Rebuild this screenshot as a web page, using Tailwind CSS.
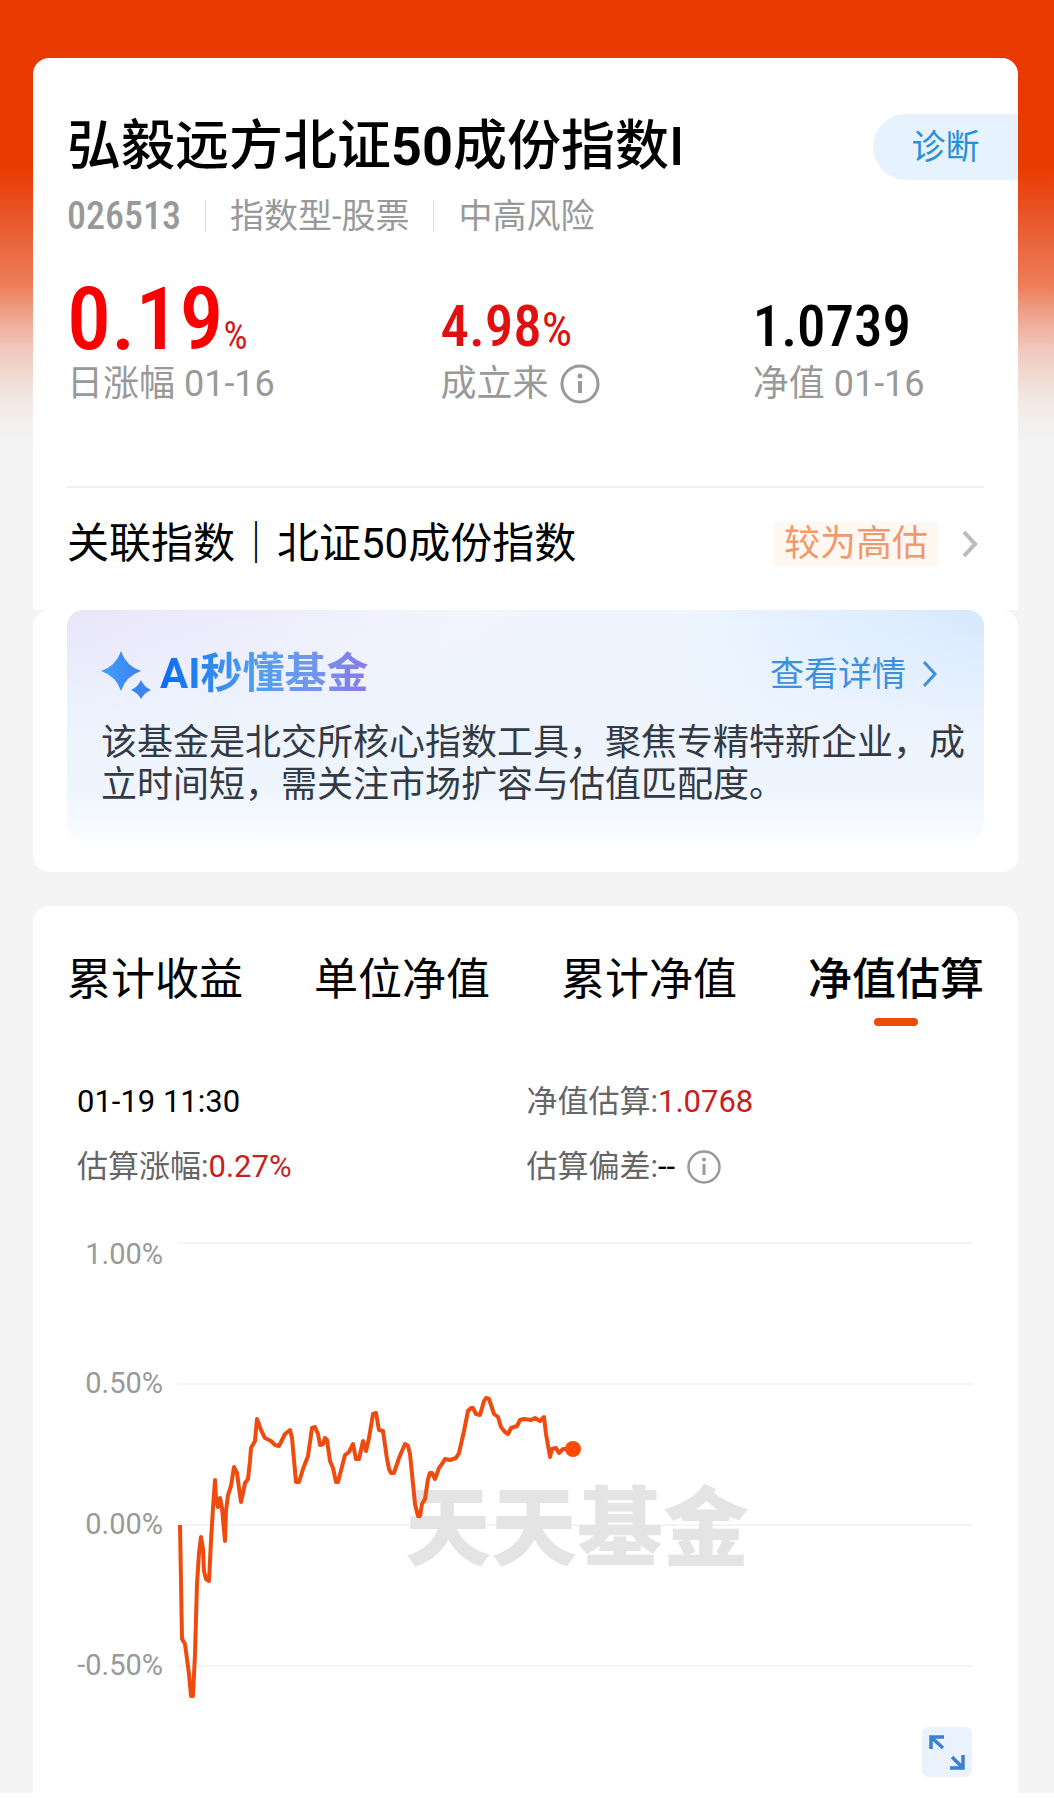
<!DOCTYPE html>
<html lang="zh-CN">
<head>
<meta charset="UTF-8">
<meta name="viewport" content="width=device-width, initial-scale=1.0">
<title>弘毅远方北证50成份指数I</title>
<script src="https://cdn.jsdelivr.net/npm/@tailwindcss/browser@4"></script>
</head>
<body class="bg-white font-['Roboto','Noto_Sans_CJK_SC',sans-serif] text-black">
<div class="bg-[#f4f4f4] bg-[linear-gradient(180deg,#e83900_165px,#e95e33_230px,#ee7d58_285px,#f0a38c_315px,#f1c9be_350px,#f1e0da_385px,#f3f0ee_420px,#f4f4f4_450px)] pl-[33px] pr-9 pt-[58px]">

<!-- fund summary -->
<section class="bg-white rounded-t-2xl pt-14 pb-6">
<div class="flex items-center justify-between pl-[34px]">
<h1 class="text-[54px] leading-[66px] font-medium">弘毅远方北证<span class="font-bold">50</span>成份指数I</h1>
<button class="w-[145px] h-[66px] rounded-l-full bg-[#e6f3fe] text-[34px] text-[#2a8fd8]">诊断</button>
</div>
<div class="flex items-center mt-3 pl-[34px] text-[34px] leading-[48px] text-[#999]">
<span class="text-[38px] font-medium font-['Roboto_Condensed','Roboto',sans-serif]">026513</span>
<span class="w-px h-8 mx-6 bg-[#ddd]"></span>
<span>指数型-股票</span>
<span class="w-px h-8 mx-6 bg-[#ddd]"></span>
<span>中高风险</span>
</div>
<div class="grid grid-cols-[373fr_312fr_231fr] items-end mt-[46px] px-[34px]">
<div>
<div class="text-[88px] leading-[66px] font-medium text-[#fa0000] font-['Roboto_Condensed','Roboto',sans-serif]">0.19<span class="text-[38px] leading-none font-normal text-[#d11a1a]">%</span></div>
<div class="mt-[5px] text-[36px] leading-[48px] text-[#999]">日涨幅 01-16</div>
</div>
<div>
<div class="text-[57px] leading-[66px] font-medium text-[#e01010] font-['Roboto_Condensed','Roboto',sans-serif]">4.98<span class="font-normal text-[48px] leading-none">%</span></div>
<div class="flex items-center gap-3 text-[36px] leading-[48px] text-[#999]">成立来
<svg class="size-[40px]" viewBox="0 0 40 40" fill="none" stroke="#999" stroke-width="3"><circle cx="20" cy="20" r="18"/><path d="M20 17v12" stroke-width="4"/><circle cx="20" cy="12" r="2.5" fill="#999" stroke="none"/></svg>
</div>
</div>
<div>
<div class="text-[57px] leading-[66px] font-medium font-['Roboto_Condensed','Roboto',sans-serif]">1.0739</div>
<div class="text-[36px] leading-[48px] text-[#999]">净值 01-16</div>
</div>
</div>
<div class="mx-[34px] mt-[78px] border-t-2 border-[#f0f0f0]"></div>
<a href="#" class="flex items-center justify-between pl-[34px] pr-[40px] pt-7 pb-[14px]">
<span class="text-[42px] leading-[56px]">关联指数｜北证50成份指数</span>
<span class="flex items-center gap-6">
<span class="px-[10px] rounded bg-[#fff7f2] text-[36px] leading-[44px] text-[#f09a6c]">较为高估</span>
<svg class="w-4 h-7" viewBox="0 0 16 28" fill="none" stroke="#bbb" stroke-width="4"><path d="M2 2l11 12L2 26"/></svg>
</span>
</a>
</section>

<!-- AI digest -->
<section class="bg-white rounded-2xl px-[34px] pb-8">
<div class="rounded-2xl pl-[34px] pr-4 pt-[38px] pb-[34px] bg-[linear-gradient(180deg,#fff0_0%,#edf4fe_55%,#f0f6ff_80%,#fafcff_100%),linear-gradient(100deg,#e9e5fa_0%,#f4f4fe_40%,#edf5ff_65%,#d3e7fe_100%)]">
<div class="flex items-center justify-between pr-[30px]">
<h2 class="flex items-center gap-[9px]">
<svg class="w-[50px] h-[50px]" viewBox="0 0 50 50"><defs><linearGradient id="star" x1="0" y1="0" x2="1" y2="0"><stop offset="0" stop-color="#3ea2fb"/><stop offset="1" stop-color="#3d7ff0"/></linearGradient></defs><path fill="url(#star)" d="M20 2Q25 17 40 22Q25 27 20 42Q15 27 0 22Q15 17 20 2Z"/><path fill="#3d83f2" d="M40 31Q43 38 50 41Q43 44 40 50Q37 44 30 41Q37 38 40 31Z"/></svg>
<span class="text-[42px] leading-[52px] font-bold text-transparent bg-clip-text bg-[linear-gradient(90deg,#0a6cf0,#4f9fee_45%,#6e98ee_70%,#8a78ea)]">AI秒懂基金</span>
</h2>
<a href="#" class="flex items-center gap-4 text-[34px] leading-[48px] text-[#3f8fdf]">查看详情
<svg class="w-4 h-7" viewBox="0 0 16 28" fill="none" stroke="#3f8fdf" stroke-width="3"><path d="M2 2l11 12L2 26"/></svg>
</a>
</div>
<p class="mt-[22px] text-[36px] leading-[42px] text-[#333a44]">该基金是北交所核心指数工具，聚焦专精特新企业，成立时间短，需关注市场扩容与估值匹配度。</p>
</div>
</section>

<!-- valuation chart -->
<section class="mt-[34px] bg-white rounded-t-2xl px-[34px] pt-11 pb-4">
<nav class="flex justify-between text-[44px] leading-[60px]">
<button>累计收益</button>
<button>单位净值</button>
<button>累计净值</button>
<button class="relative font-medium">净值估算<span class="absolute left-1/2 -translate-x-1/2 top-[68px] w-11 h-2 rounded bg-[#ee4a0c]"></span></button>
</nav>
<div class="grid grid-cols-[449fr_457fr] gap-y-[21px] mt-[70px] pl-[10px] text-[31px] leading-[44px] text-[#666]">
<div class="text-black">01-19 11:30</div>
<div>净值估算:<span class="text-[#c81e1e]">1.0768</span></div>
<div>估算涨幅:<span class="text-[#c81e1e]">0.27%</span></div>
<div class="flex items-center">估算偏差:<span class="text-black">--</span>
<svg class="size-[34px] ml-3" viewBox="0 0 34 34" fill="none" stroke="#999" stroke-width="2.5"><circle cx="17" cy="17" r="15.5"/><path d="M17 14v11" stroke-width="3"/><circle cx="17" cy="9.500" r="2" fill="#999" stroke="none"/></svg>
</div>
</div>
<div class="flex mt-[48px] pr-3">
<div class="w-24 shrink-0 text-right text-[29px] leading-[34px] text-[#999]">
<div class="mb-[95px]">1.00%</div>
<div class="mb-[107px]">0.50%</div>
<div class="mb-[107px]">0.00%</div>
<div>-0.50%</div>
</div>
<svg class="flex-1 ml-[15px]" viewBox="0 0 794 480">
<g stroke="#f4f4f4" stroke-width="2"><path d="M0 6h794M0 147h794M0 288h794M0 429h794"/></g>
<text x="227" y="322" font-size="86" font-weight="900" fill="#e4e4e4">天天基金</text>
<polyline transform="translate(0 4)" fill="none" stroke="#f04b0e" stroke-width="4" stroke-linejoin="round" points="2,284 4,398 7,403 11,433 13,455 15,455 17,413 19,343 21,312 23,296 25,308 26,330 28,338 31,340 33,300 35,267 37,239 38,257 40,266 42,257 44,267 47,300 48,270 50,254 53,245 56,226 59,232 61,247 63,261 65,252 67,242 70,238 72,220 73,207 77,200 79,178 83,189 87,197 93,200 97,204 101,205 107,193 112,189 114,197 118,241 121,241 125,228 130,215 134,187 137,186 140,193 142,204 145,203 147,197 149,199 152,220 155,227 158,241 160,241 167,214 171,211 175,203 178,218 181,218 185,200 188,210 191,197 195,173 198,172 201,189 205,190 209,218 211,228 213,232 216,232 221,217 227,203 230,205 232,213 237,263 240,275 242,275 244,263 247,258 250,238 252,232 254,232 257,238 261,227 264,223 267,218 272,219 278,217 281,212 286,190 290,170 293,167 295,167 298,173 302,174 306,160 308,157 311,158 316,173 320,176 323,186 327,191 330,193 333,187 339,185 342,179 346,178 353,179 357,177 362,180 366,176 368,193 371,210 372,216 374,208 378,207 381,212 385,208 395,208"/>
<circle cx="395" cy="212" r="8" fill="#ff4a00"/>
</svg>
</div>
<div class="flex justify-end mt-[10px] pr-3">
<button aria-label="全屏" class="size-[50px] rounded-md bg-[#eaf2fd]">
<svg class="size-full" viewBox="0 0 50 50" fill="none" stroke="#3b7fd6" stroke-width="3.500"><path d="M9 22V10h13M10 11l11 10M41 28v13H28M40 40L30 30"/></svg>
</button>
</div>
</section>
</div>
</body>
</html>
